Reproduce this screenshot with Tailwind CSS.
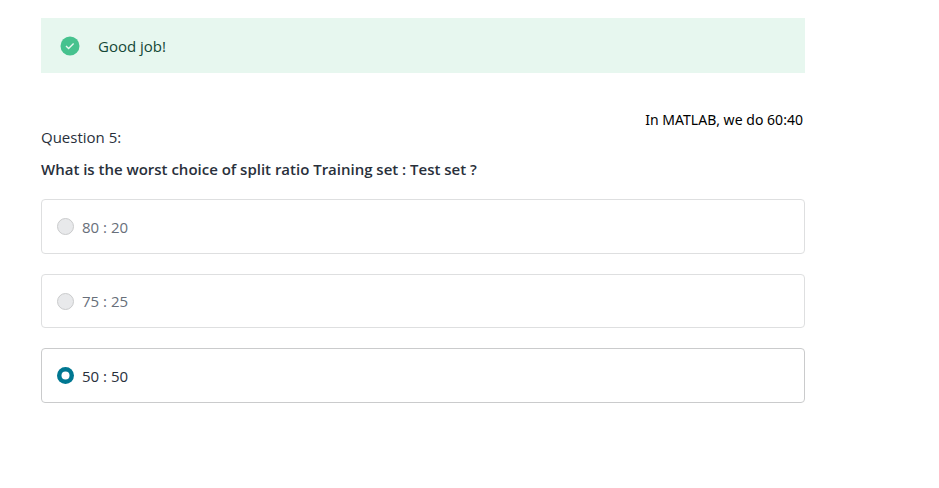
<!DOCTYPE html>
<html lang="en"><head><meta charset="utf-8"><title>Quiz</title>
<script src="https://cdn.jsdelivr.net/npm/@tailwindcss/browser@4"></script></head>
<body class="bg-white">
<main class="ml-[41px] w-[764px] pt-[18px] font-['Open_Sans',sans-serif] text-[15px] leading-[22px] text-[#29303b]">
<div class="flex h-[55px] items-center bg-[#e7f7ef] pl-[19px]">
<svg class="size-5" viewBox="0 0 20 20"><circle cx="10" cy="10" r="9.5" fill="#46c28e"/><path d="M6 10l2.6 2.5 5-5" fill="none" stroke="#e7f7ef" stroke-width="1.4"/></svg>
<p class="ml-[18px] text-[#144836]">Good job!</p></div>
<p class="mt-[36px] pr-0.5 text-right font-['Noto_Sans',sans-serif] text-[14px] tracking-[0.03px] text-black">In MATLAB, we do 60:40</p>
<p class="-mt-[5px]">Question 5:</p>
<h1 class="mt-[10px] font-semibold tracking-[-0.01px]">What is the worst choice of split ratio Training set : Test set ?</h1>
<ul class="mt-[19px] flex flex-col gap-5">
<li class="flex h-[55px] items-center gap-2 rounded-[4px] border border-[#dedfe0] pl-[15px] text-[#686f7a]"><span class="size-[17px] rounded-full border border-[#cacbcc] bg-[#e8e9eb]"></span><span>80 : 20</span></li>
<li class="flex h-[54px] items-center gap-2 rounded-[4px] border border-[#dedfe0] pl-[15px] text-[#686f7a]"><span class="size-[17px] rounded-full border border-[#cacbcc] bg-[#e8e9eb]"></span><span>75 : 25</span></li>
<li class="flex h-[55px] items-center gap-2 rounded-[4px] border border-[#cacbcc] pl-[15px]"><svg class="size-[17px]" viewBox="0 0 17 17"><circle cx="8.5" cy="8.5" r="8.5" fill="#007791"/><circle cx="8.5" cy="8.5" r="4" fill="#fff"/></svg><span>50 : 50</span></li>
</ul>
</main></body></html>
